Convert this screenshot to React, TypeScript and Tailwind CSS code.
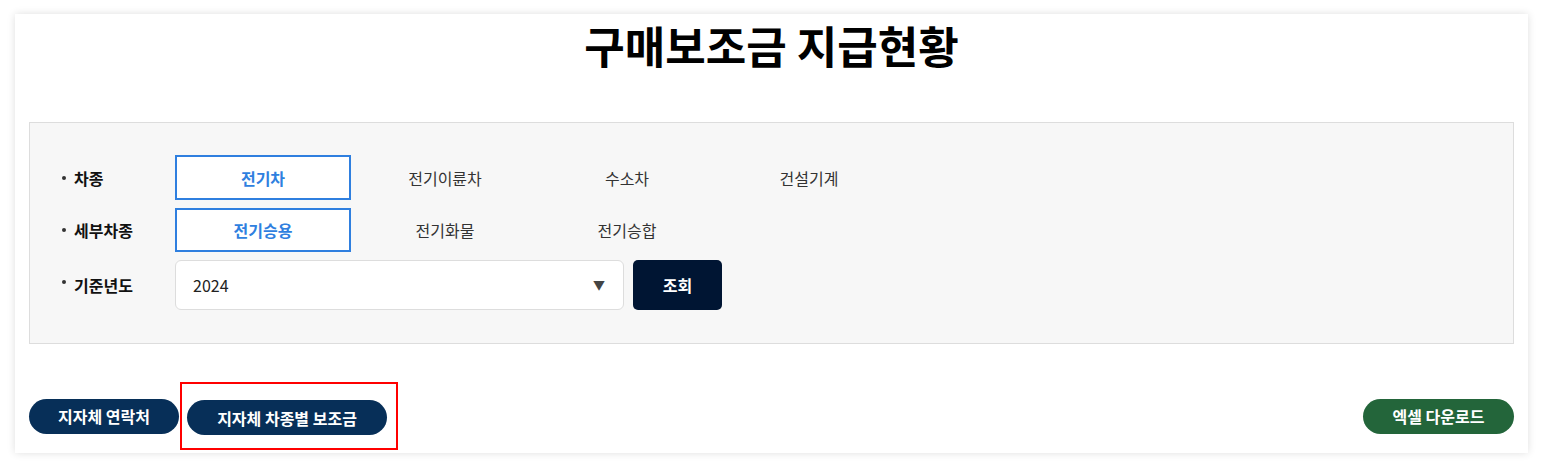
import React from "react";

const font = { fontFamily: '"Noto Sans CJK KR", "Noto Sans", sans-serif' };

function Option({ label, active }: { label: string; active?: boolean }) {
  return (
    <div
      className={
        "w-[176px] h-full flex items-center justify-center text-[16px] " +
        (active
          ? "bg-white border-2 border-[#2f7fdf] text-[#2f7fdf] font-semibold"
          : "text-[#333333]")
      }
    >
      {label}
    </div>
  );
}

function Label({ text, raised }: { text: string; raised?: boolean }) {
  return (
    <div className="w-[145px] pl-[32px] flex items-center gap-[8px] text-[16px] font-bold text-[#111]">
      <span className={"w-[4px] h-[4px] rounded-full bg-[#333] " + (raised ? "-mt-[6px]" : "")} />
      <span>{text}</span>
    </div>
  );
}

export default function App() {
  return (
    <div className="w-[1543px] h-[468px] bg-white pt-[14px] px-[15px]" style={font}>
      <div className="bg-white h-[439px] shadow-[0_0_8px_rgba(0,0,0,0.13)] px-[14px] flex flex-col">
        <h1 className="text-center text-[44px] font-bold text-black leading-none pt-[9px] h-[108px] shrink-0">
          구매보조금 지급현황
        </h1>
        <div className="border border-[#dddddd] bg-[#f7f7f7] pt-[32px] pb-[33px] flex flex-col gap-[8px]">
          <div className="flex h-[45px]">
            <Label text="차종" />
            <div className="flex gap-[6px]">
              <Option label="전기차" active />
              <Option label="전기이륜차" />
              <Option label="수소차" />
              <Option label="건설기계" />
            </div>
          </div>
          <div className="flex h-[44px]">
            <Label text="세부차종" />
            <div className="flex gap-[6px]">
              <Option label="전기승용" active />
              <Option label="전기화물" />
              <Option label="전기승합" />
            </div>
          </div>
          <div className="flex h-[50px]">
            <Label text="기준년도" raised />
            <div className="w-[449px] h-full bg-white border border-[#dddddd] rounded-[6px] flex items-center justify-between pl-[17px] pr-[18px] text-[16px] text-[#222]">
              <span>2024</span>
              <span className="text-[12px] text-[#444]">▼</span>
            </div>
            <button className="ml-[9px] w-[89px] h-full bg-[#001533] rounded-[5px] text-white text-[16px] font-bold">
              조회
            </button>
          </div>
        </div>
        <div className="flex items-center justify-between mt-[38px]">
          <div className="flex items-center gap-[1px]">
            <button className="w-[150px] h-[35px] rounded-full bg-[#072f58] text-white text-[16px] font-bold">
              지자체 연락처
            </button>
            <div className="border-2 border-[#ff0000] pl-[5px] pr-[9px] pt-[16px] pb-[13px]">
              <button className="w-[200px] h-[35px] rounded-full bg-[#072f58] text-white text-[16px] font-bold block">
                지자체 차종별 보조금
              </button>
            </div>
          </div>
          <button className="w-[151px] h-[35px] rounded-full bg-[#23653a] text-white text-[16px] font-bold">
            엑셀 다운로드
          </button>
        </div>
      </div>
    </div>
  );
}
